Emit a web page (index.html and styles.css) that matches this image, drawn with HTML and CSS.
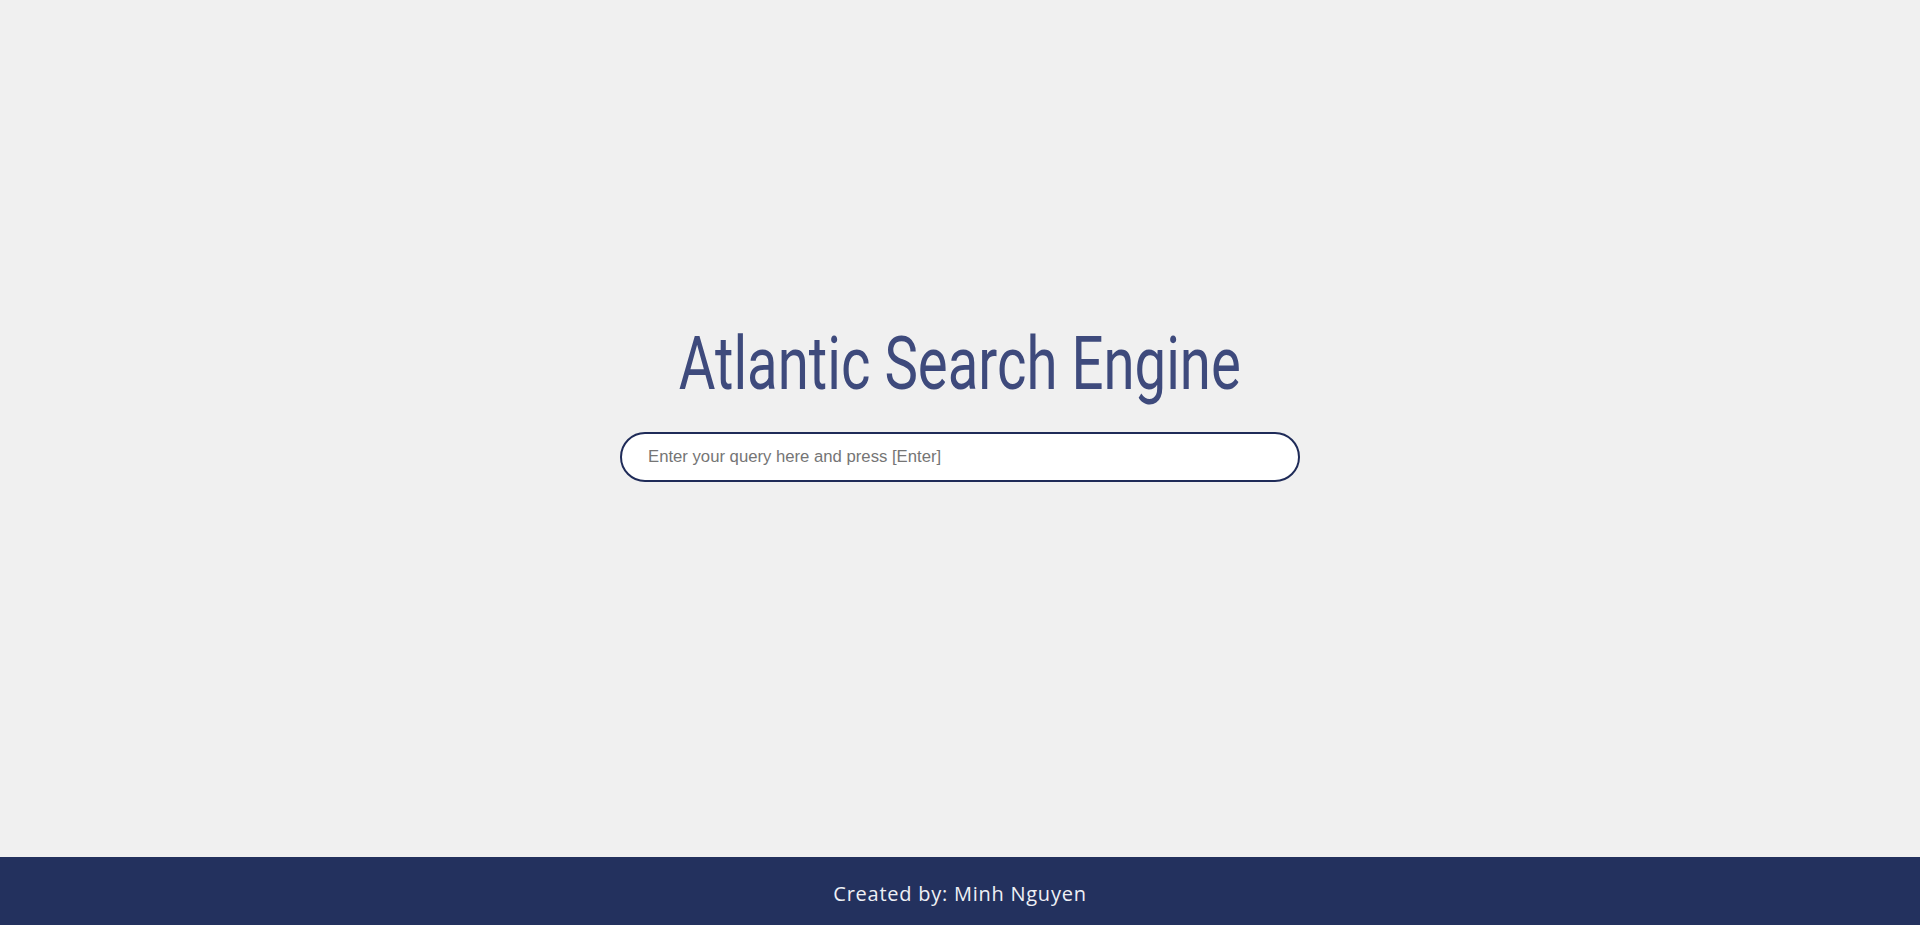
FILE: index.html
```html
<!DOCTYPE html>
<html lang="en">
<head>
<meta charset="utf-8">
<title>Atlantic Search Engine</title>
<link rel="stylesheet" href="styles.css">
</head>
<body>
<div class="page">
  <main class="main">
    <h1 class="title">Atlantic Search Engine</h1>
    <form class="search-form" onsubmit="return false;">
      <input class="search-input" type="text" placeholder="Enter your query here and press [Enter]">
    </form>
  </main>
  <footer class="footer">
    <p class="credit">Created by: Minh Nguyen</p>
  </footer>
</div>
</body>
</html>
```

FILE: styles.css
```css
html, body {
  margin: 0;
  padding: 0;
  height: 100%;
}
body {
  background: #f0f0f0;
  font-family: "Liberation Sans", Arial, sans-serif;
}
.page {
  display: flex;
  flex-direction: column;
  height: 100vh;
}
.main {
  flex: 1;
  display: flex;
  flex-direction: column;
  align-items: center;
  justify-content: center;
  padding-bottom: 48px;
}
.title {
  margin: 0 0 30px;
  font-family: Roboto, sans-serif;
  font-weight: 400;
  font-size: 74.5px;
  line-height: 1;
  color: #3e4a7c;
  transform: scaleX(0.756);
  white-space: nowrap;
}
.search-form {
  margin: 0;
}
.search-input {
  box-sizing: border-box;
  width: 680px;
  height: 50px;
  border: 2px solid #1f2b58;
  border-radius: 25px;
  background: #ffffff;
  padding: 0 26px;
  font-family: "Liberation Sans", Arial, sans-serif;
  font-size: 16.7px;
  color: #333;
  outline: none;
}
.search-input::placeholder {
  color: #757575;
}
.footer {
  height: 68px;
  background: #23315e;
  display: flex;
  align-items: center;
  justify-content: center;
  padding-top: 4px;
  box-sizing: border-box;
}
.credit {
  margin: 0;
  font-family: "Open Sans", sans-serif;
  font-size: 20px;
  color: #eef0f5;
  letter-spacing: 0.75px;
}
```
